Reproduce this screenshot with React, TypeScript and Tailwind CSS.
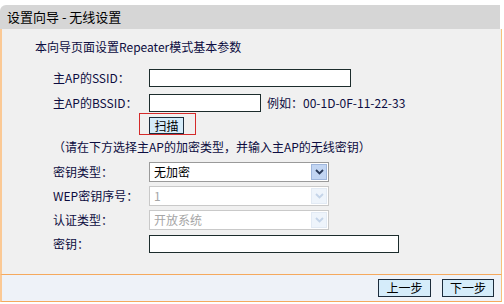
import React from 'react';

const font = { fontFamily: '"Noto Sans CJK SC", "Liberation Sans", sans-serif' };

function Chevron({ dim }: { dim?: boolean }) {
  return (
    <svg width="9" height="6" viewBox="0 0 9 6">
      <path d="M1 1 L4.5 4.5 L8 1" fill="none" stroke={dim ? '#c4d4e8' : '#2a3a5a'} strokeWidth="1.8" />
    </svg>
  );
}

function Select({ value, disabled }: { value: string; disabled?: boolean }) {
  return (
    <div
      className={
        'flex h-[20px] w-[180px] items-stretch bg-white border ' +
        (disabled ? 'border-[#c9c9c9] text-[#a6a6a6]' : 'border-[#9a9a9a] text-black')
      }
    >
      <div className="flex flex-1 items-center pl-[4px] text-[12px]">{value}</div>
      <div
        className={
          'my-[1px] mr-[1px] flex w-[16px] items-center justify-center border ' +
          (disabled ? 'border-[#e2eaf4] bg-[#eef4fb]' : 'border-[#9fb6dc] bg-[#c2d5f2]')
        }
      >
        <Chevron dim={disabled} />
      </div>
    </div>
  );
}

function Row({ label, children, className = '' }: { label: string; children: React.ReactNode; className?: string }) {
  return (
    <div className={'flex items-center ' + className}>
      <div className="w-[96px] text-[12px] text-[#0c0c40]">{label}</div>
      {children}
    </div>
  );
}

export default function App() {
  return (
    <div className="h-[304px] w-[504px] overflow-hidden bg-white pt-[5px]" style={font}>
      <div className="flex h-[24px] w-[500px] items-center rounded-tl-[6px] bg-[#d6d6d6] pl-[7px] text-[13px] text-black">
        设置向导 - 无线设置
      </div>
      <div className="h-[245px] w-[502px] border-l-2 border-r border-l-[#fbc995] border-r-[#f6c27a] bg-[#f0f0f0] pt-[9px]">
        <div className="ml-[33px] flex h-[18px] items-center text-[12px] text-[#0c0c40]">
          本向导页面设置Repeater模式基本参数
        </div>
        <div className="ml-[51px]">
          <Row label="主AP的SSID：" className="mt-[13px] h-[18px]">
            <div className="h-[18px] w-[202px] border border-[#1c2c2c] bg-white" />
          </Row>
          <Row label="主AP的BSSID：" className="mt-[7px] h-[18px]">
            <div className="h-[18px] w-[112px] border border-[#1c2c2c] bg-white" />
            <div className="ml-[6px] text-[12px] text-[#0c0c40]">例如：00-1D-0F-11-22-33</div>
          </Row>
          <div className="ml-[86px] mt-[1px] h-[22px] w-[57px] border border-[#d42a2a] pl-[9px] pt-[3px]">
            <button className="flex h-[17px] w-[35px] items-center justify-center border border-[#1c2c3c] bg-[#d5ecfa] text-[12px] text-black">
              扫描
            </button>
          </div>
          <div className="mt-[3px] flex h-[18px] items-center text-[12px] text-[#0c0c40]">
            （请在下方选择主AP的加密类型，并输入主AP的无线密钥）
          </div>
          <Row label="密钥类型：" className="mt-[6px] h-[20px]">
            <Select value="无加密" />
          </Row>
          <Row label="WEP密钥序号：" className="mt-[4px] h-[20px]">
            <Select value="1" disabled />
          </Row>
          <Row label="认证类型：" className="mt-[4px] h-[20px]">
            <Select value="开放系统" disabled />
          </Row>
          <Row label="密钥：" className="mt-[5px] h-[18px]">
            <div className="h-[18px] w-[250px] border border-[#1c2c2c] bg-white" />
          </Row>
        </div>
      </div>
      <div className="flex h-[28px] w-[502px] items-center justify-end gap-[11px] border-y border-l-2 border-r border-y-[#f5a95e] border-l-[#fbc995] border-r-[#f6c27a] bg-[#eef2f8] pr-[7px]">
        <button className="flex h-[18px] w-[53px] items-center justify-center border border-[#1c2c3c] bg-[#d5ecfa] text-[12px] text-black">
          上一步
        </button>
        <button className="flex h-[18px] w-[52px] items-center justify-center border border-[#1c2c3c] bg-[#d5ecfa] text-[12px] text-black">
          下一步
        </button>
      </div>
    </div>
  );
}
